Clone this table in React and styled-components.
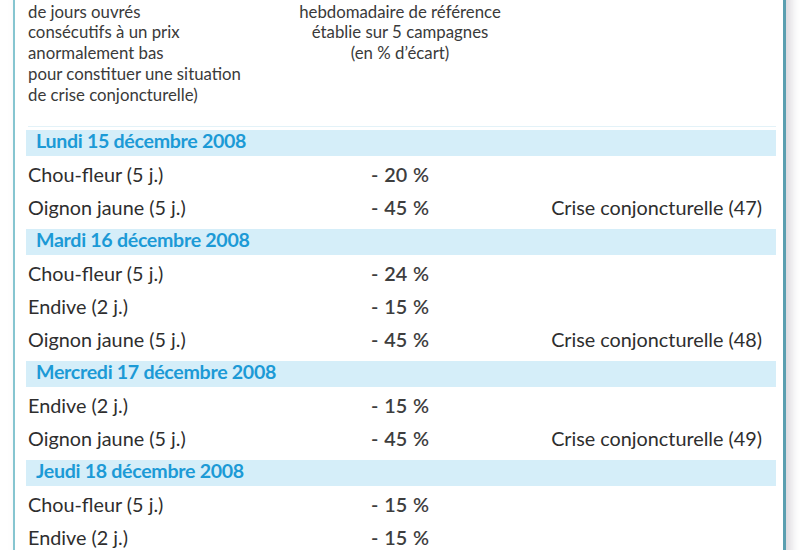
import React from "react";
import styled, { createGlobalStyle } from "styled-components";

const Global = createGlobalStyle`
  html, body { margin: 0; padding: 0; background: #fff; }
  body { font-family: Lato, "Open Sans", "Liberation Sans", sans-serif; color: #2e2e2e; }
`;

const Viewport = styled.div`
  width: 800px;
  height: 550px;
  overflow: hidden;
  background: #fff;
  padding-left: 13px;
  box-sizing: border-box;
`;

const Frame = styled.div`
  width: 773px;
  box-sizing: border-box;
  border-left: 2px solid #86c5d0;
  border-right: 3px solid #5b9fb0;
  box-shadow: 5px 0 9px rgba(120, 110, 130, 0.28);
  min-height: 600px;
  margin-top: -19px;
  padding: 0 7px 0 13px;
  background: #fff;
`;

const Grid = styled.div`
  display: grid;
  grid-template-columns: 252px 240px 1fr;
  align-items: center;
`;

const Header = styled(Grid)`
  align-items: start;
  padding-bottom: 21px;
  border-bottom: 1px solid #e3f2f8;
  font-size: 16.8px;
  line-height: 20.7px;
  color: #3a3a3a;
`;

const HeadCell = styled.div`
  text-align: ${(p) => (p.$center ? "center" : "left")};
  white-space: nowrap;
`;

const Row = styled(Grid)`
  box-sizing: border-box;
  height: 33.3px;
  padding-bottom: 5px;
  font-size: 19.8px;
`;

const Label = styled.div`
  white-space: nowrap;
`;

const Pct = styled.div`
  text-align: center;
  font-weight: 600;
  color: #3e3e3e;
  word-spacing: 1px;
`;

const Note = styled.div`
  text-align: right;
  padding-right: 14px;
  white-space: nowrap;
`;

const Band = styled.div`
  box-sizing: border-box;
  height: 26px;
  margin: 3px 0 3.3px -2px;
  padding: 0 0 5px 10px;
  background: #d5eef9;
  color: #1c9ad6;
  font-weight: 700;
  font-size: 19.6px;
  display: flex;
  align-items: center;
  letter-spacing: -0.3px;
  white-space: nowrap;
`;

const data = [
  {
    day: "Lundi 15 décembre 2008",
    rows: [
      ["Chou-fleur (5 j.)", "- 20 %", ""],
      ["Oignon jaune (5 j.)", "- 45 %", "Crise conjoncturelle (47)"],
    ],
  },
  {
    day: "Mardi 16 décembre 2008",
    rows: [
      ["Chou-fleur (5 j.)", "- 24 %", ""],
      ["Endive (2 j.)", "- 15 %", ""],
      ["Oignon jaune (5 j.)", "- 45 %", "Crise conjoncturelle (48)"],
    ],
  },
  {
    day: "Mercredi 17 décembre 2008",
    rows: [
      ["Endive (2 j.)", "- 15 %", ""],
      ["Oignon jaune (5 j.)", "- 45 %", "Crise conjoncturelle (49)"],
    ],
  },
  {
    day: "Jeudi 18 décembre 2008",
    rows: [
      ["Chou-fleur (5 j.)", "- 15 %", ""],
      ["Endive (2 j.)", "- 15 %", ""],
    ],
  },
];

export default function App() {
  return (
    <>
      <Global />
      <Viewport>
        <Frame>
          <Header>
            <HeadCell>
              (Nombre minimum
              <br />
              de jours ouvrés
              <br />
              consécutifs à un prix
              <br />
              anormalement bas
              <br />
              pour constituer une situation
              <br />
              de crise conjoncturelle)
            </HeadCell>
            <HeadCell $center>
              Écart à la moyenne
              <br />
              hebdomadaire de référence
              <br />
              établie sur 5 campagnes
              <br />
              (en % d’écart)
            </HeadCell>
            <HeadCell />
          </Header>
          {data.map((d) => (
            <React.Fragment key={d.day}>
              <Band>{d.day}</Band>
              {d.rows.map((r, i) => (
                <Row key={i}>
                  <Label>{r[0]}</Label>
                  <Pct>{r[1]}</Pct>
                  <Note>{r[2]}</Note>
                </Row>
              ))}
            </React.Fragment>
          ))}
        </Frame>
      </Viewport>
    </>
  );
}
